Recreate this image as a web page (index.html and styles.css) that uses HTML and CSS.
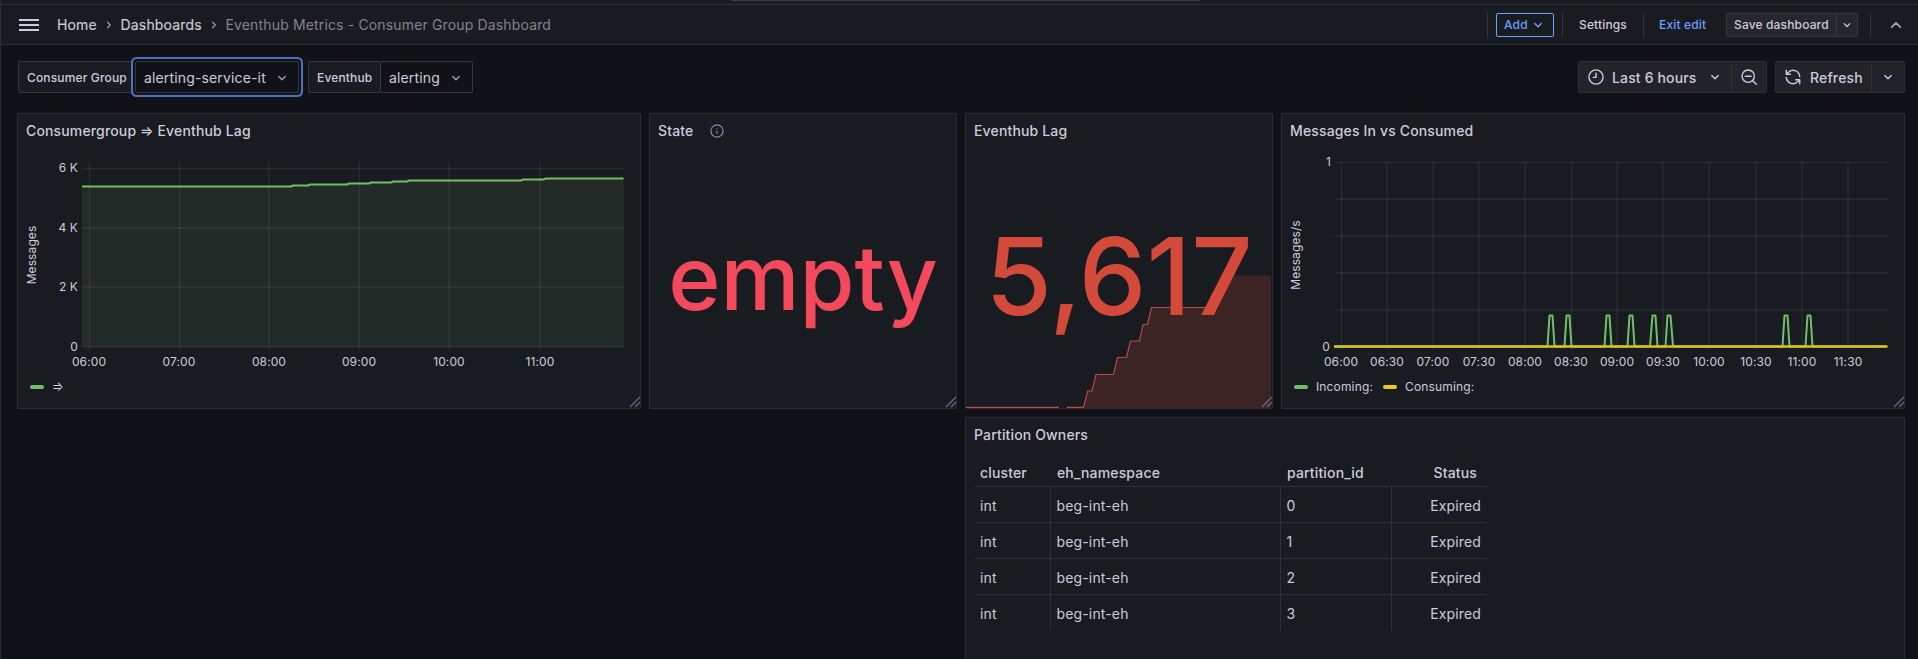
FILE: index.html
```html
<!DOCTYPE html>
<html lang="en">
<head>
<meta charset="utf-8">
<title>Eventhub Metrics - Consumer Group Dashboard</title>
<link rel="stylesheet" href="styles.css">
</head>
<body>
<svg class="defs" width="0" height="0">
  <symbol id="down" viewBox="0 0 16 16"><path d="M4.800 6.500 8 9.700l3.200-3.200" fill="none" stroke="currentColor" stroke-width="1.400" stroke-linecap="round" stroke-linejoin="round"/></symbol>
  <symbol id="grip" viewBox="0 0 12 12"><path d="M1 11 11 1M6 11l5-5" fill="none" stroke="#6b6c73" stroke-width="1.3"/></symbol>
</svg>
<div class="topstrip"><div class="omnibar"></div></div>
<header class="header">
  <button class="menu" aria-label="Menu"><i></i><i></i><i></i></button>
  <nav class="crumbs">
    <a class="home">Home</a><svg class="sep" viewBox="0 0 16 16"><path d="m6.600 5.300 2.700 2.700-2.700 2.700" fill="none" stroke="currentColor" stroke-width="1.300" stroke-linecap="round" stroke-linejoin="round"/></svg>
    <a>Dashboards</a><svg class="sep" viewBox="0 0 16 16"><path d="m6.600 5.300 2.700 2.700-2.700 2.700" fill="none" stroke="currentColor" stroke-width="1.300" stroke-linecap="round" stroke-linejoin="round"/></svg>
    <span class="current">Eventhub Metrics - Consumer Group Dashboard</span>
  </nav>
  <div class="actions">
    <span class="rule"></span>
    <button class="add">Add<svg class="chev"><use href="#down"/></svg></button>
    <span class="rule rule-a"></span>
    <span class="settings">Settings</span>
    <span class="rule rule-b"></span>
    <span class="exit">Exit edit</span>
    <div class="save"><span class="save-label">Save dashboard</span><span class="save-more"><svg class="chev small"><use href="#down"/></svg></span></div>
    <span class="rule rule-c"></span>
    <svg class="collapse" viewBox="0 0 16 16"><path d="m3.700 10.200 4.300-4.300 4.300 4.300" fill="none" stroke="currentColor" stroke-width="1.700" stroke-linecap="round" stroke-linejoin="round"/></svg>
  </div>
</header>

<section class="controls">
  <div class="variable">
    <label class="var-label group-label">Consumer Group</label>
    <div class="select focused"><span>alerting-service-it</span><svg class="chev muted"><use href="#down"/></svg></div>
  </div>
  <div class="variable second">
    <label class="var-label hub-label">Eventhub</label>
    <div class="select hub"><span>alerting</span><svg class="chev muted"><use href="#down"/></svg></div>
  </div>
  <div class="time-tools">
    <div class="btn-group time">
      <span class="range"><svg class="icon" viewBox="0 0 16 16"><circle cx="8" cy="8" r="7.100"/><path d="M8 4.300V8.400H5.300"/></svg><span class="btn-text">Last 6 hours</span><svg class="chev"><use href="#down"/></svg></span>
      <span class="zoom-out"><svg class="icon" viewBox="0 0 16 16"><circle cx="7.200" cy="7.200" r="6.200"/><path d="M4.300 7.200h5.800M11.700 11.700l3.600 3.600"/></svg></span>
    </div>
    <div class="btn-group refresh">
      <span class="refresh-main"><svg class="icon" viewBox="0 0 16 16"><path d="M14.700 7.600A6.700 6.700 0 0 0 3 3.600L1.600 5.100M1.300 1.200v4h4M1.300 8.400A6.700 6.700 0 0 0 13 12.400l1.400-1.500M14.700 14.800v-4h-4"/></svg><span class="btn-text">Refresh</span></span>
      <span class="refresh-more"><svg class="chev"><use href="#down"/></svg></span>
    </div>
  </div>
</section>

<main class="grid">
  <section class="panel wide">
    <h2><span>Consumergroup <span class="arrow">⇒</span> Eventhub Lag</span></h2>
    <svg class="chart" width="622" height="216" viewBox="18 148 622 216">
      <g class="gridlines">
        <path d="M82 168.500H624M82 228H624M82 287.200H624M82 346.800H624"/>
        <path d="M89.500 162V350M179.500 162V350M269 162V350M359.200 162V350M449 162V350M540 162V350"/>
      </g>
      <path class="area" d="M82 186.500H291L293 185.500H308L310 184.500H347L349 183.500H369L371 182.500H391L393 181.500H407L409 180.500H521L523 179.500H543L546 178.500H624V347H82Z"/>
      <path class="line green" d="M82 186.500H291L293 185.500H308L310 184.500H347L349 183.500H369L371 182.500H391L393 181.500H407L409 180.500H521L523 179.500H543L546 178.500H623.500"/>
      <g class="axis end"><text x="78" y="172">6 K</text><text x="78" y="232">4 K</text><text x="78" y="291">2 K</text><text x="78" y="351">0</text></g>
      <g class="axis mid"><text x="89" y="366">06:00</text><text x="179" y="366">07:00</text><text x="269" y="366">08:00</text><text x="359" y="366">09:00</text><text x="449" y="366">10:00</text><text x="540" y="366">11:00</text><text transform="translate(36 255) rotate(-90)">Messages</text></g>
    </svg>
    <div class="legend"><i class="swatch green-bg"></i><span class="arrow">⇒</span></div>
    <svg class="grip"><use href="#grip"/></svg>
  </section>

  <section class="panel">
    <h2>State<svg class="info" viewBox="0 0 16 16"><circle cx="8" cy="8" r="7"/><path d="M8 7.500v3.600M8 4.700v.8"/></svg></h2>
    <div class="stat state">empty</div>
    <svg class="grip"><use href="#grip"/></svg>
  </section>

  <section class="panel">
    <h2>Eventhub Lag</h2>
    <div class="stat lag">5,617</div>
    <svg class="spark" viewBox="966 270 306 138">
      <path class="spark-area" d="M1083 407.500L1088 391H1092L1096 374.500H1113L1117 357.500H1126L1130 341H1139L1143 324.500H1147L1151 307.500H1206L1212 291.500H1222L1229 275.500H1271V408H1083Z"/>
      <path class="spark-line" d="M966 407.300H1059M1067 407.300H1083.500L1087.700 391H1092L1096 374.500H1113.500L1117.500 357.500H1126.500L1130.500 341H1139.500L1143 324.500H1147.500L1151.500 307.500H1206"/>
    </svg>
    <svg class="grip"><use href="#grip"/></svg>
  </section>

  <section class="panel wide">
    <h2>Messages In vs Consumed</h2>
    <svg class="chart" width="622" height="216" viewBox="1282 148 622 216">
      <g class="gridlines">
        <path d="M1335 162.300H1888M1335 199H1888M1335 236H1888M1335 273H1888M1335 310H1888M1335 346.800H1888"/>
        <path d="M1341.500 162V350M1387 162V350M1433 162V350M1479 162V350M1525 162V350M1571.500 162V350M1617 162V350M1663 162V350M1709 162V350M1756 162V350M1802 162V350M1848 162V350"/>
      </g>
      <path class="line green" d="M1334 346.500H1547.500L1549.500 315.500H1552.500L1554.500 346.500H1564.500L1566.500 315.500H1569.500L1571.500 346.500H1604.500L1606.500 315.500H1609.500L1611.500 346.500H1627.500L1629.500 315.500H1632.500L1634.500 346.500H1650L1652.500 315.500H1655.500L1657.500 346.500H1665.500L1667.500 315.500H1670.500L1673 346.500H1782.500L1784.500 315.500H1787.500L1789.500 346.500H1805.500L1807.500 315.500H1810.500L1812.500 346.500H1887"/>
      <path class="line yellow" d="M1334 346.500H1887.500"/>
      <g class="axis end"><text x="1331" y="166">1</text><text x="1330" y="351">0</text></g>
      <g class="axis mid"><text x="1341" y="366">06:00</text><text x="1387" y="366">06:30</text><text x="1433" y="366">07:00</text><text x="1479" y="366">07:30</text><text x="1525" y="366">08:00</text><text x="1571" y="366">08:30</text><text x="1617" y="366">09:00</text><text x="1663" y="366">09:30</text><text x="1709" y="366">10:00</text><text x="1756" y="366">10:30</text><text x="1802" y="366">11:00</text><text x="1848" y="366">11:30</text><text transform="translate(1300 255) rotate(-90)">Messages/s</text></g>
    </svg>
    <div class="legend"><i class="swatch green-bg"></i><span>Incoming:</span><i class="swatch yellow-bg"></i><span>Consuming:</span></div>
    <svg class="grip"><use href="#grip"/></svg>
  </section>

  <section class="panel owners">
    <h2>Partition Owners</h2>
    <table>
      <colgroup><col class="c1"><col class="c2"><col class="c3"><col class="c4"></colgroup>
      <thead><tr><th>cluster</th><th>eh_namespace</th><th>partition_id</th><th>Status</th></tr></thead>
      <tbody>
        <tr><td>int</td><td>beg-int-eh</td><td>0</td><td>Expired</td></tr>
        <tr><td>int</td><td>beg-int-eh</td><td>1</td><td>Expired</td></tr>
        <tr><td>int</td><td>beg-int-eh</td><td>2</td><td>Expired</td></tr>
        <tr><td>int</td><td>beg-int-eh</td><td>3</td><td>Expired</td></tr>
      </tbody>
    </table>
  </section>
</main>
</body>
</html>
```
FILE: styles.css
```css
* { box-sizing: border-box; }
html, body { height: 100%; }
body {
  margin: 0;
  overflow: hidden;
  background: #111217;
  border-left: 1px solid #2a2c31;
  color: #ccccdc;
  font: 14px/22px Inter, "Liberation Sans", sans-serif;
  letter-spacing: 0.15px;
}
button { font: inherit; color: inherit; letter-spacing: inherit; background: none; border: 0; padding: 0; }
svg { display: block; flex: none; }
.defs { position: absolute; }

.topstrip { height: 5px; background: #181b1f; border-bottom: 1px solid #2c2e33; }
.omnibar { width: 469px; height: 1px; margin-left: 730px; background: #3a3b40; }
.header {
  height: 40px;
  display: flex;
  align-items: center;
  padding: 0 14px 0 18px;
  background: #181b1f;
  border-bottom: 1px solid #2c2e33;
}
.menu { width: 20px; display: flex; flex-direction: column; gap: 3px; }
.menu i { height: 2px; background: #ccccdc; }
.crumbs { display: flex; align-items: center; margin-left: 18px; }
.crumbs a { -webkit-text-stroke: 0.15px currentColor; }
.sep { width: 16px; height: 16px; margin: 1px 3.9px 0; color: #9d9eaa; }
.current { color: #83848d; }
.actions { margin-left: auto; display: flex; align-items: center; font-size: 12px; font-weight: 500; }
.rule { width: 1px; height: 24px; background: #34363b; }
.chev { width: 16px; height: 16px; }
.muted { color: #9d9eaa; }
.add { width: 58px; height: 24px; margin-left: 8px; display: flex; align-items: center; padding-left: 7px; gap: 2px; border: 1px solid #6e9fff; border-radius: 2px; color: #6e9fff; }
.rule-a { margin-left: 8px; }
.settings { width: 48px; margin-left: 16px; white-space: nowrap; }
.rule-b { margin-left: 16px; }
.exit { width: 48px; margin-left: 15px; color: #6e9fff; white-space: nowrap; }
.save { display: flex; width: 132px; height: 24px; margin-left: 19px; background: #26272c; border: 1px solid #34353a; border-radius: 2px; }
.save-label { width: 110px; padding-left: 7px; white-space: nowrap; border-right: 1px solid #3a3b41; }
.save-more { flex: 1; display: grid; place-items: center; }
.small { width: 14px; height: 14px; }
.rule-c { margin-left: 12px; }
.collapse { width: 16px; height: 16px; margin-left: 17px; color: #a5a6b2; }

.controls { display: flex; height: 32px; margin: 16px 13px 20px 17px; }
.variable { display: flex; }
.second { margin-left: 9px; }
.var-label { height: 32px; padding-left: 8px; line-height: 32px; font-size: 12px; font-weight: 500; white-space: nowrap; background: #181b1f; border: 1px solid #35373c; border-right: 0; border-radius: 2px 0 0 2px; }
.group-label { width: 117px; }
.hub-label { width: 72px; }
.select { height: 32px; display: flex; align-items: center; justify-content: space-between; padding: 1px 8px 0; background: #111217; border: 1px solid #35373c; border-radius: 2px; white-space: nowrap; }
.focused { width: 164px; box-shadow: 0 0 0 2px #111217, 0 0 0 4px #4a72c0; }
.hub { width: 93px; }
.time-tools { display: flex; gap: 8px; margin-left: auto; font-weight: 500; }
.btn-group { display: flex; height: 32px; background: #222328; border: 1px solid #2e2f34; border-radius: 2px; }
.btn-group > span { display: flex; align-items: center; }
.btn-text { padding-top: 1px; }
.icon { width: 16px; height: 16px; fill: none; stroke: currentColor; stroke-width: 1.4; stroke-linecap: round; stroke-linejoin: round; }
.time { width: 189px; }
.range { width: 153px; padding-left: 9px; gap: 8px; border-right: 1px solid #313237; }
.range .chev { margin-left: 2px; }
.zoom-out { flex: 1; justify-content: center; }
.refresh { width: 130px; }
.refresh-main { width: 96px; padding-left: 9px; gap: 9px; border-right: 1px solid #313237; }
.refresh-more { flex: 1; justify-content: center; }

.grid {
  display: grid;
  grid-template-columns: 624px 308px 308px 624px;
  grid-template-rows: 296px 260px;
  gap: 8px 8px;
  margin-left: 16px;
}
.panel { position: relative; background: #181b1f; border: 1px solid #2b2d32; border-radius: 2px; min-width: 0; }
.panel h2 { display: flex; align-items: center; gap: 17px; height: 34px; margin: 0; padding: 0 8px 1px; font-size: 14px; font-weight: 500; }
.arrow { display: inline-block; font-weight: 400; transform: translateY(-0.5px) scale(1.05); }
.info { width: 14px; height: 14px; fill: none; stroke: #8e8f99; stroke-width: 1.3; }
.chart { overflow: visible; }
.gridlines path { fill: none; stroke: rgba(240, 250, 255, 0.08); stroke-width: 1.3; }
.area { fill: #7fb878; fill-opacity: 0.1; }
.line { fill: none; stroke-width: 2; stroke-linejoin: round; }
.green { stroke: #73bf69; }
.yellow { stroke: #dfc21d; stroke-width: 2.6; }
.axis text { font-size: 12px; fill: #ccccdc; letter-spacing: 0.1px; }
.end { text-anchor: end; }
.mid { text-anchor: middle; }
.legend { display: flex; align-items: center; height: 22px; margin-top: 12px; padding-left: 12px; font-size: 12px; }
.swatch { width: 14px; height: 4px; border-radius: 2px; margin-right: 8px; }
.legend span + .swatch { margin-left: 10px; }
.green-bg { background: #73bf69; }
.yellow-bg { background: #f2cc0c; }
.grip { position: absolute; right: -1px; bottom: 0; width: 12px; height: 12px; }
.stat { position: relative; z-index: 1; height: 258px; display: flex; align-items: center; justify-content: center; font-weight: 500; letter-spacing: 0; line-height: 1; }
.state { font-size: 89px; color: #f2495c; }
.lag { font-size: 107.5px; color: #d44a3a; }
.spark { position: absolute; left: 0; bottom: 0; width: 306px; height: 138px; }
.spark-area { fill: #d44a3a; fill-opacity: 0.2; }
.spark-line { fill: none; stroke: #b84a44; stroke-width: 1.2; }

.owners { grid-column: 3 / 5; }
.owners table { width: 513px; margin: 4px 0 0 8px; border-collapse: collapse; table-layout: fixed; }
.c1 { width: 76px; }
.c2 { width: 230px; }
.c3 { width: 111px; }
.c4 { width: 96px; }
th, td { height: 36px; padding: 3px 6px 0; text-align: left; border-bottom: 1px solid #2d3035; }
th { height: 30px; font-weight: 500; padding: 4px 10px 0 6px; }
td { font-weight: 400; border-right: 1px solid #2d3035; }
th:nth-child(n+2):nth-child(-n+3) { padding-left: 7px; }
th:last-child, td:last-child { text-align: right; border-right: 0; }
tbody tr:last-child td { border-bottom: 0; }
```
